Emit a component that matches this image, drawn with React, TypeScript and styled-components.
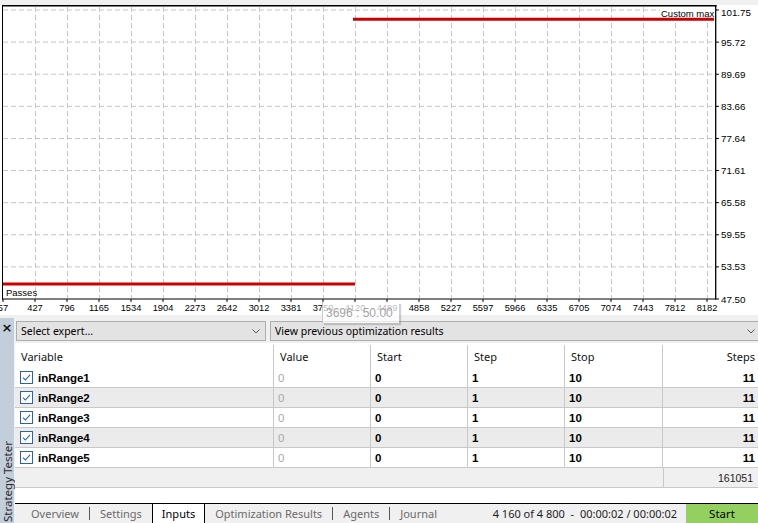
import React from "react";
import styled, { createGlobalStyle } from "styled-components";

const GlobalStyle = createGlobalStyle`
  html, body {
    margin: 0;
    padding: 0;
    background: #f0f0f0;
  }
  body {
    font-family: "Noto Sans", "Liberation Sans", Arial, sans-serif;
  }
`;

const COLS = "259px 97px 97px 97px 98px 95px";
const LINE = "#c8c8c8";

const Window = styled.div`
  position: relative;
  width: 758px;
  height: 523px;
  display: flex;
  flex-direction: column;
  overflow: hidden;
  background: #f0f0f0;
`;

const ChartFrame = styled.div`
  height: 318px;
  flex: none;
  svg {
    display: block;
  }
`;

const Tooltip = styled.div`
  position: absolute;
  left: 322px;
  top: 302px;
  width: 77px;
  height: 21px;
  box-sizing: border-box;
  padding: 4px 0 0 3px;
  background: rgba(255, 255, 255, 0.72);
  border-left: 1px solid rgba(150, 150, 150, 0.5);
  box-shadow: 2px 2px 1px rgba(120, 120, 120, 0.35);
  font: 12px "Liberation Sans", Arial, sans-serif;
  line-height: 14px;
  color: #a3a3a3;
  z-index: 2;
`;

const Panel = styled.div`
  flex: 1;
  display: flex;
  min-height: 0;
`;

const SideStrip = styled.div`
  width: 14px;
  flex: none;
  margin-right: 1px;
  background: #c3cedb;
  display: flex;
  flex-direction: column;
  align-items: center;
  justify-content: space-between;
`;

const CloseMark = styled.span`
  margin-top: 2px;
  font: bold 13px "DejaVu Sans", sans-serif;
  line-height: 16px;
  color: #111;
`;

const SideTitle = styled.span`
  writing-mode: vertical-rl;
  transform: rotate(180deg);
  font-size: 11.5px;
  color: #2a2a2a;
  margin-bottom: 1px;
  white-space: nowrap;
`;

const Main = styled.div`
  flex: 1;
  display: flex;
  flex-direction: column;
  min-width: 0;
`;

const Toolbar = styled.div`
  height: 25px;
  box-sizing: border-box;
  padding: 3px 0 0 1px;
  display: flex;
  gap: 4px;
`;

const Dropdown = styled.div<{ $grow?: boolean }>`
  height: 20px;
  box-sizing: border-box;
  ${(p) => (p.$grow ? "flex: 1; margin-right: -3px;" : "width: 250px;")}
  display: flex;
  align-items: center;
  justify-content: space-between;
  padding: 0 5px 0 4px;
  background: #e3e3e3;
  border: 1px solid #adadad;
  font-size: 10.5px;
  color: #000;
`;

const Table = styled.div`
  display: flex;
  flex-direction: column;
  background: #fff;
`;

const HeaderRow = styled.div`
  display: grid;
  grid-template-columns: ${COLS};
  height: 25px;
  background: #fff;
`;

const HeaderCell = styled.div<{ $right?: boolean }>`
  display: flex;
  align-items: center;
  justify-content: ${(p) => (p.$right ? "flex-end" : "flex-start")};
  padding: ${(p) => (p.$right ? "0 3px 0 0" : "0 0 0 6px")};
  margin-top: 2px;
  font-size: 11px;
  color: #111;
  border-right: ${(p) => (p.$right ? "none" : `1px solid ${LINE}`)};
`;

const Row = styled.div<{ $alt?: boolean }>`
  display: grid;
  grid-template-columns: ${COLS};
  height: 20px;
  box-sizing: border-box;
  border-bottom: 1px solid ${LINE};
  background: ${(p) => (p.$alt ? "#ebebeb" : "#fff")};
`;

const Cell = styled.div<{ $right?: boolean; $muted?: boolean }>`
  display: flex;
  align-items: center;
  gap: 5px;
  justify-content: ${(p) => (p.$right ? "flex-end" : "flex-start")};
  padding: ${(p) => (p.$right ? "0 3px 0 0" : "0 0 0 4px")};
  border-right: ${(p) => (p.$right ? "none" : `1px solid ${LINE}`)};
  font: ${(p) => (p.$muted ? "normal" : "bold")} 11.5px "Liberation Sans", Arial, sans-serif;
  color: ${(p) => (p.$muted ? "#a8a8a8" : "#000")};
`;

const VarCell = styled(Cell)`
  padding-left: 5px;
`;

const Checkbox = styled.span`
  width: 13px;
  height: 13px;
  box-sizing: border-box;
  border: 1px solid #2a64a8;
  background: #fff;
  display: flex;
  align-items: center;
  justify-content: center;
`;

const TotalRow = styled.div`
  display: grid;
  grid-template-columns: 648px 95px;
  height: 20px;
  box-sizing: border-box;
  background: #f0f0f0;
  border-bottom: 1px solid ${LINE};
`;

const TotalCell = styled.div`
  display: flex;
  align-items: center;
  justify-content: flex-end;
  padding-right: 5px;
  border-left: 1px solid ${LINE};
  font: 10.5px "Liberation Sans", Arial, sans-serif;
  color: #222;
`;

const Spacer = styled.div`
  height: 15px;
  background: #fff;
`;

const TabBar = styled.div`
  height: 20px;
  box-sizing: border-box;
  border-top: 1px solid #000;
  display: flex;
  align-items: stretch;
  padding-left: 6px;
  background: #f0f0f0;
`;

const Tab = styled.div<{ $active?: boolean }>`
  display: flex;
  align-items: center;
  padding: 0 ${(p) => (p.$active ? "9px" : "10px")};
  margin-top: ${(p) => (p.$active ? "-1px" : "0")};
  font-size: 11px;
  color: ${(p) => (p.$active ? "#000" : "#6a6a6a")};
  background: ${(p) => (p.$active ? "#fff" : "transparent")};
  border: ${(p) => (p.$active ? "1px solid #000" : "none")};
  border-bottom: none;
`;

const TabSep = styled.span`
  width: 1px;
  height: 13px;
  align-self: center;
  background: #555;
`;

const Status = styled.div`
  margin-left: auto;
  display: flex;
  align-items: center;
  padding-right: 9px;
  font-size: 11px;
  color: #1e1e1e;
  white-space: pre;
`;

const StartButton = styled.div`
  width: 72px;
  display: flex;
  align-items: center;
  justify-content: center;
  background: #94d060;
  font-size: 11.5px;
  color: #000;
`;

const Chevron = () => (
  <svg width="8" height="5" viewBox="0 0 8 5">
    <path d="M0.5 0.5 L4 4 L7.5 0.5" fill="none" stroke="#555" strokeWidth="1" />
  </svg>
);

const Check = () => (
  <svg width="9" height="9" viewBox="0 0 9 9">
    <path d="M1 4.6 L3.4 7 L8 1.8" fill="none" stroke="#2a64a8" strokeWidth="1.1" />
  </svg>
);

const yLabels = ["101.75", "95.72", "89.69", "83.66", "77.64", "71.61", "65.58", "59.55", "53.53", "47.50"];
const xLabels = [
  "57", "427", "796", "1165", "1534", "1904", "2273", "2642", "3012", "3381", "3750", "4120",
  "4489", "4858", "5227", "5597", "5966", "6335", "6705", "7074", "7443", "7812", "8182",
];

const yAt = (k: number) => 10 + 32.11 * k;

const Chart = () => (
  <svg width="758" height="318" viewBox="0 0 758 318" fontFamily="'Liberation Sans', Arial, sans-serif">
    <rect x="0" y="0" width="758" height="318" fill="#f0f0f0" />
    <rect x="0" y="5" width="758" height="310" fill="#fff" />
    {yLabels.slice(0, 9).map((_, k) => (
      <line key={"h" + k} x1="3" x2="715" y1={yAt(k)} y2={yAt(k)} stroke="#c6c6c6" strokeDasharray="5 3" />
    ))}
    {Array.from({ length: 22 }, (_, k) => 35.5 + 32 * k).map((x) => (
      <line key={"v" + x} x1={x} x2={x} y1="7" y2="298" stroke="#c6c6c6" strokeDasharray="5 3" />
    ))}
    <line x1="353" x2="714" y1="19.3" y2="19.3" stroke="#cc0000" strokeWidth="3" />
    <line x1="3" x2="355" y1="284" y2="284" stroke="#cc0000" strokeWidth="3" />
    <rect x="660" y="6.5" width="55" height="10.5" fill="#fff" />
    <text x="661" y="16.5" fontSize="9.5" fill="#000">Custom max</text>
    <rect x="3" y="286" width="31" height="12" fill="#fff" />
    <text x="6" y="295.5" fontSize="9.5" fill="#000">Passes</text>
    <line x1="2" x2="716.5" y1="5.8" y2="5.8" stroke="#000" strokeWidth="1.6" />
    <line x1="2.5" x2="2.5" y1="5" y2="299.5" stroke="#000" />
    <line x1="715.7" x2="715.7" y1="5" y2="299.5" stroke="#000" strokeWidth="1.3" />
    <line x1="2" x2="716" y1="299" y2="299" stroke="#000" />
    {yLabels.map((label, k) => (
      <g key={label}>
        <line x1="716" x2="719" y1={yAt(k)} y2={yAt(k)} stroke="#000" />
        <text x="721" y={k === 0 ? 16 : yAt(k) + 3.6} fontSize="9.8" fill="#000">
          {label}
        </text>
      </g>
    ))}
    {xLabels.map((label, k) => (
      <g key={label}>
        <line x1={3 + 32 * k} x2={3 + 32 * k} y1="299" y2="302" stroke="#000" />
        <text x={3 + 32 * k} y="310.5" fontSize="9.3" textAnchor="middle" fill="#000">
          {label}
        </text>
      </g>
    ))}
  </svg>
);

const rows = [1, 2, 3, 4, 5].map((n) => ({
  name: `inRange${n}`,
  value: "0",
  start: "0",
  step: "1",
  stop: "10",
  steps: "11",
}));

const tabs = ["Overview", "Settings", "Inputs", "Optimization Results", "Agents", "Journal"];
const ACTIVE = "Inputs";

export default function App() {
  return (
    <>
      <GlobalStyle />
      <Window>
        <ChartFrame>
          <Chart />
        </ChartFrame>
        <Tooltip>3696 : 50.00</Tooltip>
        <Panel>
          <SideStrip>
            <CloseMark>×</CloseMark>
            <SideTitle>Strategy Tester</SideTitle>
          </SideStrip>
          <Main>
            <Toolbar>
              <Dropdown>
                <span>Select expert...</span>
                <Chevron />
              </Dropdown>
              <Dropdown $grow>
                <span>View previous optimization results</span>
                <Chevron />
              </Dropdown>
            </Toolbar>
            <Table>
              <HeaderRow>
                <HeaderCell>Variable</HeaderCell>
                <HeaderCell>Value</HeaderCell>
                <HeaderCell>Start</HeaderCell>
                <HeaderCell>Step</HeaderCell>
                <HeaderCell>Stop</HeaderCell>
                <HeaderCell $right>Steps</HeaderCell>
              </HeaderRow>
              {rows.map((r, i) => (
                <Row key={r.name} $alt={i % 2 === 1}>
                  <VarCell>
                    <Checkbox>
                      <Check />
                    </Checkbox>
                    {r.name}
                  </VarCell>
                  <Cell $muted>{r.value}</Cell>
                  <Cell>{r.start}</Cell>
                  <Cell>{r.step}</Cell>
                  <Cell>{r.stop}</Cell>
                  <Cell $right>{r.steps}</Cell>
                </Row>
              ))}
              <TotalRow>
                <div />
                <TotalCell>161051</TotalCell>
              </TotalRow>
              <Spacer />
            </Table>
            <TabBar>
              {tabs.map((t, i) => {
                const prev = tabs[i - 1];
                const showSep = i > 0 && t !== ACTIVE && prev !== ACTIVE;
                return (
                  <React.Fragment key={t}>
                    {showSep && <TabSep />}
                    <Tab $active={t === ACTIVE}>{t}</Tab>
                  </React.Fragment>
                );
              })}
              <Status>{"4 160 of 4 800  -  00:00:02 / 00:00:02"}</Status>
              <StartButton>Start</StartButton>
            </TabBar>
          </Main>
        </Panel>
      </Window>
    </>
  );
}
